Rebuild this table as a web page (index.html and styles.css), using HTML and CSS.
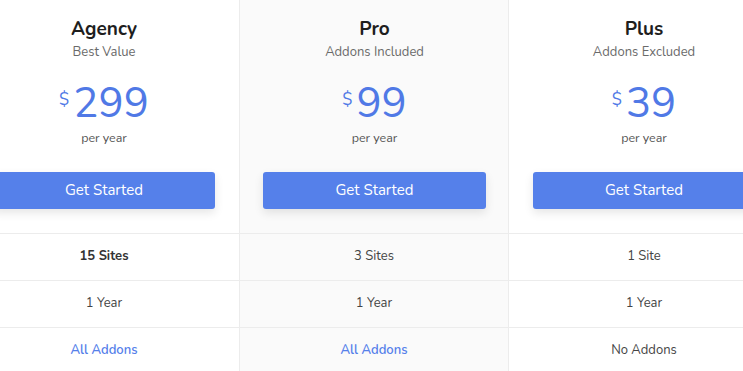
FILE: index.html
```html
<!DOCTYPE html>
<html>
<head>
<meta charset="utf-8">
<link rel="stylesheet" href="styles.css">
</head>
<body>
<div class="table">
  <div class="plan">
    <div class="head">
      <div class="name">Agency</div>
      <div class="sub">Best Value</div>
      <div class="price"><span class="cur">$</span><span class="amt">299</span></div>
      <div class="per">per year</div>
      <div class="btn">Get Started</div>
    </div>
    <div class="row strong">15 Sites</div>
    <div class="row">1 Year</div>
    <div class="row link">All Addons</div>
  </div>
  <div class="plan mid">
    <div class="head">
      <div class="name">Pro</div>
      <div class="sub">Addons Included</div>
      <div class="price"><span class="cur">$</span><span class="amt">99</span></div>
      <div class="per">per year</div>
      <div class="btn">Get Started</div>
    </div>
    <div class="row">3 Sites</div>
    <div class="row">1 Year</div>
    <div class="row link">All Addons</div>
  </div>
  <div class="plan">
    <div class="head">
      <div class="name">Plus</div>
      <div class="sub">Addons Excluded</div>
      <div class="price"><span class="cur">$</span><span class="amt">39</span></div>
      <div class="per">per year</div>
      <div class="btn">Get Started</div>
    </div>
    <div class="row">1 Site</div>
    <div class="row">1 Year</div>
    <div class="row">No Addons</div>
  </div>
</div>
</body>
</html>
```
FILE: styles.css
```css
html, body {
  margin: 0;
  padding: 0;
  background: #fff;
  overflow: hidden;
}
body {
  font-family: "Nunito", "Lato", "Open Sans", sans-serif;
  color: #444;
}
.table {
  display: flex;
  margin-left: -31px;
  width: 810px;
}
.plan {
  width: 270px;
  flex: 0 0 270px;
  box-sizing: border-box;
  text-align: center;
}
.plan.mid {
  background: #fafafa;
  border-left: 1px solid #ececec;
  border-right: 1px solid #ececec;
}
.head {
  padding: 17px 24px 24px;
  display: flex;
  flex-direction: column;
  align-items: center;
}
.plan.mid .head {
  padding-left: 23px;
  padding-right: 22px;
}
.name {
  font-size: 19px;
  font-weight: 700;
  color: #1e1e1e;
  line-height: 24px;
}
.sub {
  font-size: 13px;
  color: #6a6a6a;
  line-height: 22px;
}
.price {
  display: flex;
  align-items: flex-start;
  justify-content: center;
  color: #5079e6;
  margin-top: 19px;
  height: 44px;
}
.cur {
  font-size: 17px;
  line-height: 20px;
  margin-top: 8px;
  margin-right: 4px;
}
.amt {
  font-size: 42px;
  line-height: 44px;
}
.per {
  margin-top: 3px;
  font-size: 12.5px;
  color: #555;
  line-height: 18px;
}
.btn {
  margin-top: 25px;
  align-self: stretch;
  height: 37px;
  line-height: 37px;
  background: #5580ea;
  color: #fff;
  font-size: 15px;
  border-radius: 3px;
  box-shadow: 0 4px 10px rgba(0, 0, 0, 0.1);
}
.row {
  height: 46px;
  line-height: 45px;
  border-top: 1px solid #ececec;
  font-size: 13px;
  color: #444;
}
.row.strong {
  font-weight: 700;
  color: #333;
}
.row.link {
  color: #5580ea;
  font-weight: 600;
}
```
